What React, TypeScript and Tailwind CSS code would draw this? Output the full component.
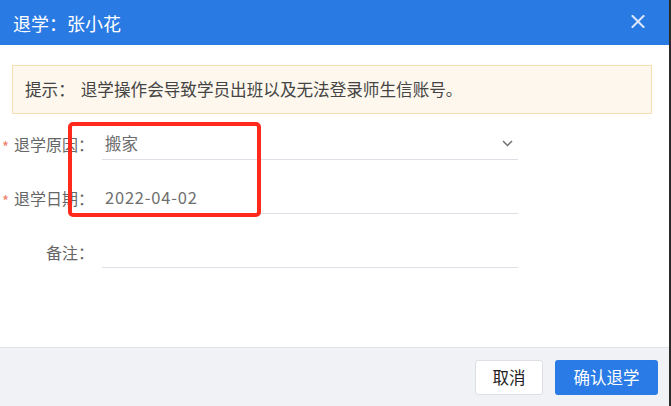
import React from "react";

const font = { fontFamily: '"Noto Sans CJK SC", "Noto Sans", sans-serif' };

function Row({ label, required, children }: { label: string; required?: boolean; children: React.ReactNode }) {
  return (
    <div className="flex items-end h-[33px]">
      <div className="w-[102px] pr-[8px] flex justify-end items-center h-[32px] text-[16px] text-[#666]">
        {required && <span className="text-[#f07c68] text-[15px] mr-[5px] mt-[7px]">*</span>}
        <span>{label}</span>
      </div>
      <div className="w-[416px] h-[33px] border-b border-[#dcdfe6] flex items-center pl-[3px] pr-[5px] text-[16.5px] text-[#6e6e6e]">
        {children}
      </div>
    </div>
  );
}

export default function App() {
  return (
    <div className="w-[671px] h-[406px] flex bg-[#2a2a2a] overflow-hidden" style={font}>
      <div className="w-[669px] h-full bg-white flex flex-col relative">
        <div className="h-[45px] bg-[#2a7ae4] flex items-center justify-between pl-[13px] pr-[24px] shrink-0">
          <span className="text-white text-[18px] leading-none">退学：张小花</span>
          <svg width="14" height="13" viewBox="0 0 14 13" className="mt-[-2px]">
            <path d="M1.5 1 L12.5 12 M12.5 1 L1.5 12" stroke="#dde9fb" strokeWidth="2" strokeLinecap="square" />
          </svg>
        </div>
        <div className="flex-1 pt-[20px]">
          <div className="ml-[12px] w-[640px] h-[49px] border border-[#f8dfb3] bg-[#fdf7ed] flex items-center pl-[12px] text-[16.6px] text-[#444]">
            <span>提示：</span>
            <span className="ml-[6px]">退学操作会导致学员出班以及无法登录师生信账号。</span>
          </div>
          <div className="mt-[13px] flex flex-col gap-[21px]">
            <Row label="退学原因：" required>
              <span className="flex-1">搬家</span>
              <svg width="11" height="7" viewBox="0 0 11 7">
                <path d="M1 1 L5.5 5.5 L10 1" stroke="#707070" strokeWidth="1.5" fill="none" />
              </svg>
            </Row>
            <Row label="退学日期：" required>
              <span className="tracking-[0.8px]">2022-04-02</span>
            </Row>
            <Row label="备注：">
              <span></span>
            </Row>
          </div>
        </div>
        <div className="h-[59px] shrink-0 border-t border-[#e0e3e8] bg-[#f0f2f5] flex items-center justify-end pr-[11px] gap-[12px]">
          <button className="w-[68px] h-[35px] bg-white border border-[#dcdfe6] rounded-[3px] text-[16.5px] text-[#222]">取消</button>
          <button className="w-[103px] h-[35px] bg-[#2a7be6] rounded-[3px] text-[16.5px] text-white">确认退学</button>
        </div>
        <div className="absolute left-[68px] top-[122px] w-[193px] h-[95px] border-[4px] border-[#ff2a1c] rounded-[5px] pointer-events-none" />
      </div>
    </div>
  );
}
